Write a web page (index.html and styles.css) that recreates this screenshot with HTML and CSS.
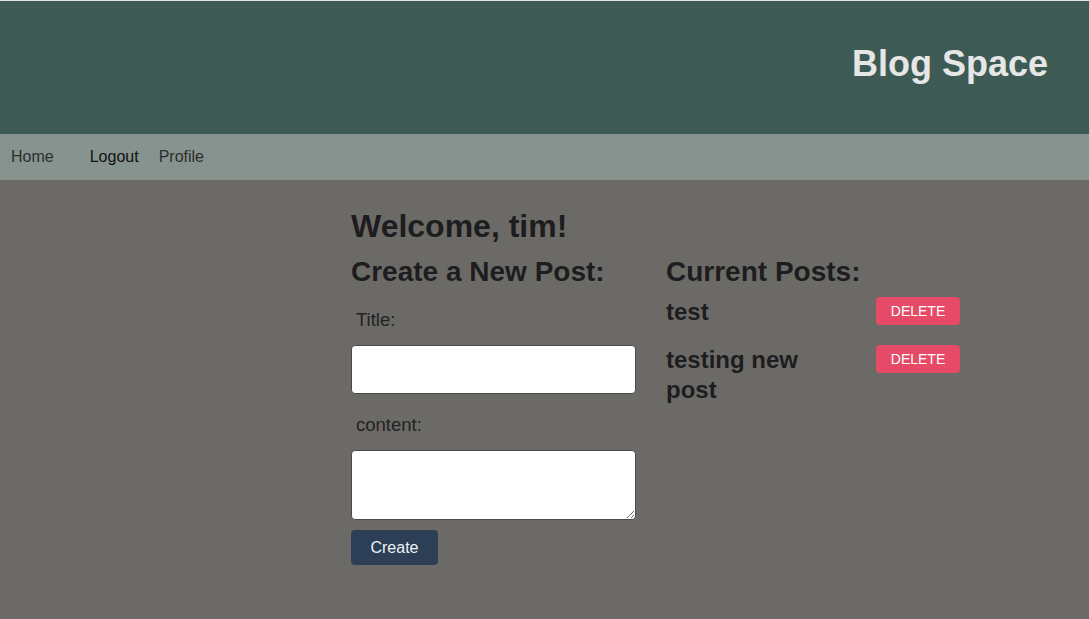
FILE: index.html
```html
<!DOCTYPE html>
<html lang="en">
<head>
<meta charset="utf-8">
<title>Blog Space</title>
<link rel="stylesheet" href="styles.css">
</head>
<body>
<header class="site-header">
  <h1 class="brand">Blog Space</h1>
</header>
<nav class="nav">
  <a class="nav-link home" href="#">Home</a>
  <a class="nav-link logout" href="#">Logout</a>
  <a class="nav-link profile" href="#">Profile</a>
</nav>
<main class="main">
  <div class="container">
    <h1 class="welcome">Welcome, tim!</h1>
    <div class="columns">
      <section class="create">
        <h2 class="section-title">Create a New Post:</h2>
        <form class="post-form">
          <label class="field-label" for="title">Title:</label>
          <input class="field-input" id="title" type="text">
          <label class="field-label field-label-content" for="content">content:</label>
          <textarea class="field-textarea" id="content"></textarea>
          <button class="create-btn" type="button">Create</button>
        </form>
      </section>
      <section class="posts">
        <h2 class="section-title">Current Posts:</h2>
        <div class="post">
          <h3 class="post-title">test</h3>
          <button class="delete-btn" type="button">DELETE</button>
        </div>
        <div class="post">
          <h3 class="post-title">testing new post</h3>
          <button class="delete-btn" type="button">DELETE</button>
        </div>
      </section>
    </div>
  </div>
</main>
</body>
</html>
```
FILE: styles.css
```css
* { box-sizing: border-box; }
html, body {
  margin: 0;
  padding: 0;
  height: 100%;
}
body {
  font-family: "Liberation Sans", Arial, sans-serif;
  background: #6c6a66;
  color: #1d1d1f;
  display: flex;
  flex-direction: column;
}
.site-header {
  background: #3e5a54;
  border-top: 1px solid #dfe3e1;
  height: 134px;
  display: flex;
  justify-content: flex-end;
  align-items: flex-start;
  padding: 42px 41px 0 0;
}
.brand {
  margin: 0;
  font-size: 36px;
  line-height: 42px;
  font-weight: bold;
  color: #e6e6e6;
}
.nav {
  background: #87938e;
  height: 46px;
  display: flex;
  align-items: center;
  padding-left: 11px;
}
.nav-link {
  font-size: 16px;
  text-decoration: none;
  color: #2b2e2d;
}
.nav-link.logout {
  color: #111;
  margin-left: 36px;
}
.nav-link.profile {
  margin-left: 20px;
}
.main {
  flex: 1;
  background: #6c6a66;
}
.container {
  margin-left: 351px;
  width: 620px;
  padding-top: 28px;
}
.welcome {
  margin: 0;
  font-size: 32px;
  line-height: 37px;
  font-weight: bold;
}
.columns {
  display: grid;
  grid-template-columns: 285px 294px;
  column-gap: 30px;
  margin-top: 10px;
}
.section-title {
  margin: 0;
  font-size: 28px;
  line-height: 33px;
  font-weight: bold;
}
.post-form {
  display: flex;
  flex-direction: column;
  align-items: flex-start;
}
.field-label {
  display: block;
  font-size: 18.5px;
  line-height: 21px;
  margin: 21px 0 15px 5px;
  color: #222;
}
.field-label-content {
  margin-top: 20px;
}
.field-input {
  width: 285px;
  height: 49px;
  border: 1px solid #4a4a4a;
  border-radius: 4px;
  background: #fff;
  margin: 0;
  font-size: 16px;
}
.field-textarea {
  width: 285px;
  height: 70px;
  border: 1px solid #4a4a4a;
  border-radius: 4px;
  background: #fff;
  margin: 0;
  font-size: 16px;
}
.create-btn {
  margin-top: 10px;
  width: 87px;
  height: 35px;
  background: #2c3f56;
  color: #eef2f6;
  border: none;
  border-radius: 4px;
  font-family: "Liberation Sans", Arial, sans-serif;
  font-size: 16px;
  padding: 0;
}
.post {
  display: grid;
  grid-template-columns: 210px 84px;
  align-items: start;
  margin-top: 9px;
}
.post + .post {
  margin-top: 18px;
}
.post-title {
  margin: 0;
  font-size: 24px;
  line-height: 30px;
  font-weight: bold;
  padding-right: 30px;
}
.delete-btn {
  width: 84px;
  height: 28px;
  background: #e64a66;
  color: #fff;
  border: none;
  border-radius: 4px;
  font-family: "Liberation Sans", Arial, sans-serif;
  font-size: 14px;
  padding: 0;
}
```
